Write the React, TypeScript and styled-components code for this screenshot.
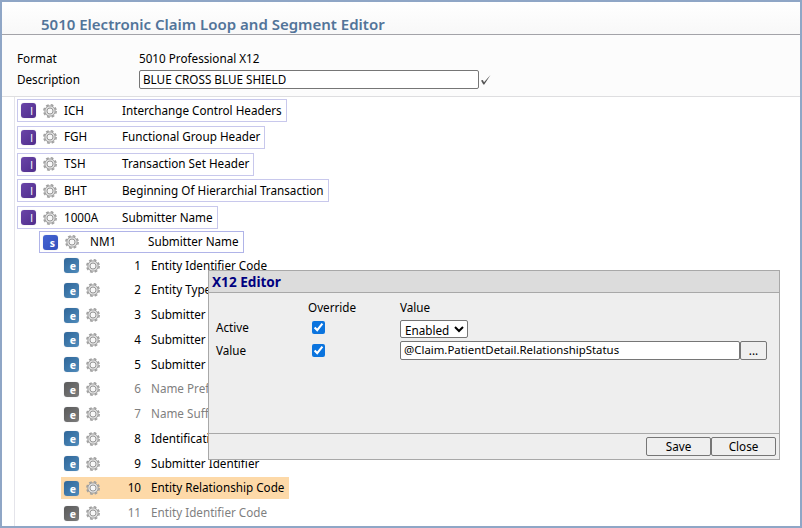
import React from 'react';
import styled, { createGlobalStyle } from 'styled-components';

const GlobalStyle = createGlobalStyle`
  html, body {
    margin: 0;
    padding: 0;
    background: #fff;
  }
  body {
    font-family: "Noto Sans", "Liberation Sans", sans-serif;
    font-size: 11.7px;
    color: #000;
  }
`;

const Frame = styled.div`
  position: relative;
  box-sizing: border-box;
  width: 802px;
  height: 528px;
  overflow: hidden;
  background: #fff;
  border: 2px solid #8fa6c6;
`;

const Title = styled.h1`
  box-sizing: border-box;
  height: 33px;
  margin: 0;
  padding: 12px 0 0 39px;
  border-bottom: 1px solid #a3a3a8;
  font-size: 15px;
  line-height: 20px;
  font-weight: 600;
  color: #527499;
  background: linear-gradient(#ffffff, #f8f8f8);
`;

const Form = styled.div`
  display: grid;
  grid-template-columns: 122px 340px 14px;
  row-gap: 2px;
  align-items: center;
  padding: 15px 0 7px 15px;
  background: #fcfcfc;
  border-bottom: 1px solid #dedee0;
`;

const FormLabel = styled.div`
  line-height: 17px;
  padding-bottom: 1px;
`;

const TextBox = styled.div`
  box-sizing: border-box;
  height: 19px;
  padding-left: 3px;
  border: 1px solid #767676;
  border-radius: 2px;
  line-height: 17px;
  background: #fff;
`;

const Check = styled.svg`
  width: 12px;
  height: 12px;
  margin-left: 1px;
`;

const Tree = styled.div`
  display: flex;
  flex-direction: column;
  align-items: flex-start;
  margin-left: 12px;
  padding: 2px 0 0 2px;
  border-left: 1px solid #e4e4ea;
`;

const LoopNode = styled.div`
  display: flex;
  align-items: center;
  box-sizing: border-box;
  height: 23px;
  padding: 0 4px 0 3px;
  margin-bottom: 3.75px;
  border: 1px solid #c8c8ec;
  white-space: nowrap;
`;

const SegmentNode = styled(LoopNode)`
  height: 22px;
  margin-left: 22px;
  margin-top: -1.75px;
  margin-bottom: 1.5px;
  border-color: #b0b4e8;
`;

const RowText = styled.span`
  flex: none;
  padding-bottom: 2px;
`;

const Code = styled(RowText)<{ $w: number; $pad: number }>`
  box-sizing: border-box;
  width: ${(p) => p.$w}px;
  padding-left: ${(p) => p.$pad}px;
`;

const Element = styled.div<{ $selected?: boolean; $off?: boolean }>`
  display: flex;
  align-items: center;
  box-sizing: border-box;
  width: 228px;
  height: 22px;
  margin-left: 44px;
  margin-bottom: 2.75px;
  padding-left: 3px;
  background: ${(p) => (p.$selected ? '#fdd9a8' : 'transparent')};
  color: ${(p) => (p.$off ? '#7f7f7f' : '#000')};
  white-space: nowrap;
`;

const Seq = styled(RowText)`
  width: 41px;
  margin-right: 10px;
  text-align: right;
`;

const Badge = styled.span<{ $kind: 'l' | 's' | 'e' | 'x' }>`
  display: flex;
  flex: none;
  align-items: flex-end;
  justify-content: flex-end;
  box-sizing: border-box;
  width: 15px;
  height: 15px;
  padding-right: 3px;
  border-radius: 3px;
  color: #fff;
  font-size: 10.5px;
  font-weight: ${(p) => (p.$kind === 'l' ? 400 : 700)};
  line-height: 13px;
  box-shadow: 0 0 1px #b9b9c4;
  background: ${(p) =>
    ({
      l: 'linear-gradient(135deg, #6a45a8, #4f2d8c)',
      s: 'linear-gradient(135deg, #4464d2, #3350bd)',
      e: 'linear-gradient(135deg, #2f6699, #4f8bbb)',
      x: 'linear-gradient(135deg, #5a5a5a, #7c7c7c)',
    })[p.$kind]};
`;

const GearSvg = styled.svg`
  flex: none;
  width: 14px;
  height: 14px;
  margin-left: 7px;
`;

const Gear = () => (
  <GearSvg viewBox="0 0 14 14">
    <circle cx="7" cy="7" r="6.2" fill="none" stroke="#a0a0a0" strokeWidth="1.5" strokeDasharray="2.8 2.07" />
    <circle cx="7" cy="7" r="5.2" fill="#dedede" stroke="#8e8e8e" strokeWidth="0.8" />
    <circle cx="7" cy="7" r="3" fill="#f7f7f7" stroke="#8e8e8e" strokeWidth="0.9" />
  </GearSvg>
);

const Dialog = styled.div`
  position: absolute;
  left: 206px;
  top: 268px;
  box-sizing: border-box;
  width: 572px;
  height: 190px;
  display: flex;
  flex-direction: column;
  background: #eeeeee;
  border: 1px solid #a8a8a8;
`;

const DialogHead = styled.div`
  box-sizing: border-box;
  height: 22px;
  padding-left: 3px;
  background: #dcdcdc;
  border-bottom: 1px solid #a8a8a8;
  color: #000080;
  font-size: 13.6px;
  font-weight: 700;
  line-height: 21px;
`;

const DialogBody = styled.div`
  flex: 1;
  display: grid;
  grid-template-columns: 92px 92px 340px 27px;
  grid-template-rows: 19px 21px 25px;
  align-items: center;
  align-content: start;
  padding: 5px 0 0 7px;
`;

const DialogLabel = styled.span`
  padding-bottom: 2px;
`;

const ValueBox = styled(TextBox)`
  font-size: 11.4px;
  line-height: 15px;
`;

const Tick = styled.input.attrs({ type: 'checkbox', defaultChecked: true })`
  width: 13px;
  height: 13px;
  margin: 0 0 0 4px;
  accent-color: #0b74de;
`;

const Select = styled.select`
  box-sizing: border-box;
  width: 68px;
  height: 18px;
  margin-top: 2px;
  padding: 0 0 2px;
  font: inherit;
  background: #fff;
  border: 1px solid #767676;
  border-radius: 2px;
`;

const Btn = styled.div<{ $w: number }>`
  box-sizing: border-box;
  width: ${(p) => p.$w}px;
  height: 19px;
  border: 1px solid #767676;
  border-radius: 2px;
  background: #efefef;
  text-align: center;
  line-height: 17px;
`;

const DialogFoot = styled.div`
  box-sizing: border-box;
  height: 26px;
  display: flex;
  justify-content: flex-end;
  align-items: flex-start;
  padding: 3px 3px 0 0;
  border-top: 1px solid #a8a8a8;
`;

const elements = [
  { n: 1, name: 'Entity Identifier Code' },
  { n: 2, name: 'Entity Type Qualifier' },
  { n: 3, name: 'Submitter Last Name' },
  { n: 4, name: 'Submitter First Name' },
  { n: 5, name: 'Submitter Middle Name' },
  { n: 6, name: 'Name Prefix', off: true },
  { n: 7, name: 'Name Suffix', off: true },
  { n: 8, name: 'Identification Code Qualifier' },
  { n: 9, name: 'Submitter Identifier' },
  { n: 10, name: 'Entity Relationship Code', selected: true },
  { n: 11, name: 'Entity Identifier Code', off: true },
];

const loops = [
  ['ICH', 'Interchange Control Headers'],
  ['FGH', 'Functional Group Header'],
  ['TSH', 'Transaction Set Header'],
  ['BHT', 'Beginning Of Hierarchial Transaction'],
  ['1000A', 'Submitter Name'],
];

export default function App() {
  return (
    <Frame>
      <GlobalStyle />
      <Title>5010 Electronic Claim Loop and Segment Editor</Title>
      <Form>
        <FormLabel>Format</FormLabel>
        <FormLabel>5010 Professional X12</FormLabel>
        <span />
        <FormLabel>Description</FormLabel>
        <TextBox>BLUE CROSS BLUE SHIELD</TextBox>
        <Check viewBox="0 0 12 12">
          <path d="M1 6.500 L2.800 6 L4 8.200 L10.500 1 L4.300 10.500 L3.300 10.500 Z" fill="#555" />
        </Check>
      </Form>
      <Tree>
        {loops.map(([code, name]) => (
          <LoopNode key={code}>
            <Badge $kind="l">l</Badge>
            <Gear />
            <Code $w={65} $pad={7}>{code}</Code>
            <RowText>{name}</RowText>
          </LoopNode>
        ))}
        <SegmentNode>
          <Badge $kind="s">s</Badge>
          <Gear />
          <Code $w={69} $pad={11}>NM1</Code>
          <RowText>Submitter Name</RowText>
        </SegmentNode>
        {elements.map((el) => (
          <Element key={el.n} $selected={el.selected} $off={el.off}>
            <Badge $kind={el.off ? 'x' : 'e'}>e</Badge>
            <Gear />
            <Seq>{el.n}</Seq>
            <RowText>{el.name}</RowText>
          </Element>
        ))}
      </Tree>
      <Dialog>
        <DialogHead>X12 Editor</DialogHead>
        <DialogBody>
          <span />
          <DialogLabel>Override</DialogLabel>
          <DialogLabel>Value</DialogLabel>
          <span />
          <DialogLabel>Active</DialogLabel>
          <Tick />
          <Select defaultValue="Enabled">
            <option>Enabled</option>
          </Select>
          <span />
          <DialogLabel>Value</DialogLabel>
          <Tick />
          <ValueBox>@Claim.PatientDetail.RelationshipStatus</ValueBox>
          <Btn $w={27}>...</Btn>
        </DialogBody>
        <DialogFoot>
          <Btn $w={65}>Save</Btn>
          <Btn $w={65}>Close</Btn>
        </DialogFoot>
      </Dialog>
    </Frame>
  );
}
